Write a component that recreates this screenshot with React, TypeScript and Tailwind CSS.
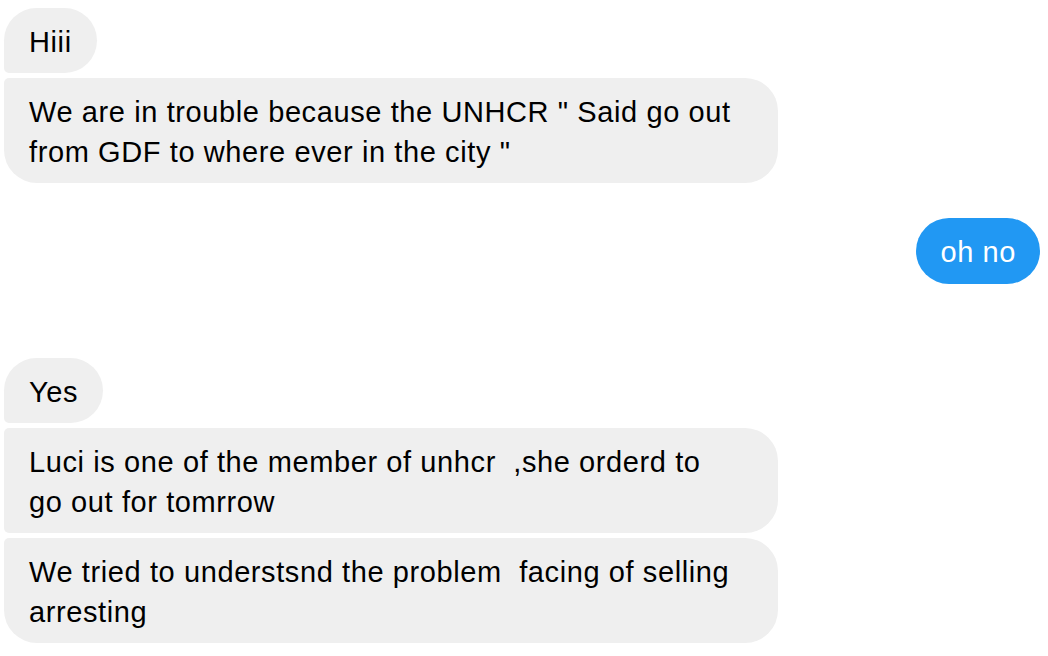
const font = { fontFamily: '"Liberation Sans", Arial, sans-serif' }

function Left({ children, pos, wide }: { children: React.ReactNode; pos: 'first' | 'mid' | 'last'; wide?: boolean }) {
  const corners =
    pos === 'first'
      ? 'rounded-[33px] rounded-bl-[5px]'
      : pos === 'last'
        ? 'rounded-[33px] rounded-tl-[5px]'
        : 'rounded-[33px] rounded-tl-[5px] rounded-bl-[5px]'
  return (
    <div className={`bg-[#efefef] text-black px-[25px] pt-[14px] pb-[11px] ${corners} ${wide ? 'w-[774px]' : 'w-fit'}`}>
      {children}
    </div>
  )
}

export default function App() {
  return (
    <div className="w-[1048px] h-[656px] bg-white overflow-hidden text-[29px] leading-[40px] tracking-[0.6px]" style={font}>
      <div className="flex flex-col gap-[5px] pl-[4px] pt-[8px]">
        <Left pos="first">Hiii</Left>
        <Left pos="last" wide>
          We are in trouble because the UNHCR " Said go out
          <br />
          from GDF to where ever in the city "
        </Left>
      </div>

      <div className="flex justify-end pr-[8px] mt-[35px]">
        <div className="bg-[#2198f3] text-white rounded-[33px] px-[24px] pt-[14px] pb-[12px]">oh no</div>
      </div>

      <div className="flex flex-col gap-[5px] pl-[4px] mt-[74px]">
        <Left pos="first">Yes</Left>
        <Left pos="mid" wide>
          Luci is one of the member of unhcr&nbsp; ,she orderd to
          <br />
          go out for tomrrow
        </Left>
        <Left pos="last" wide>
          We tried to understsnd the problem&nbsp; facing of selling
          <br />
          arresting
        </Left>
      </div>
    </div>
  )
}
